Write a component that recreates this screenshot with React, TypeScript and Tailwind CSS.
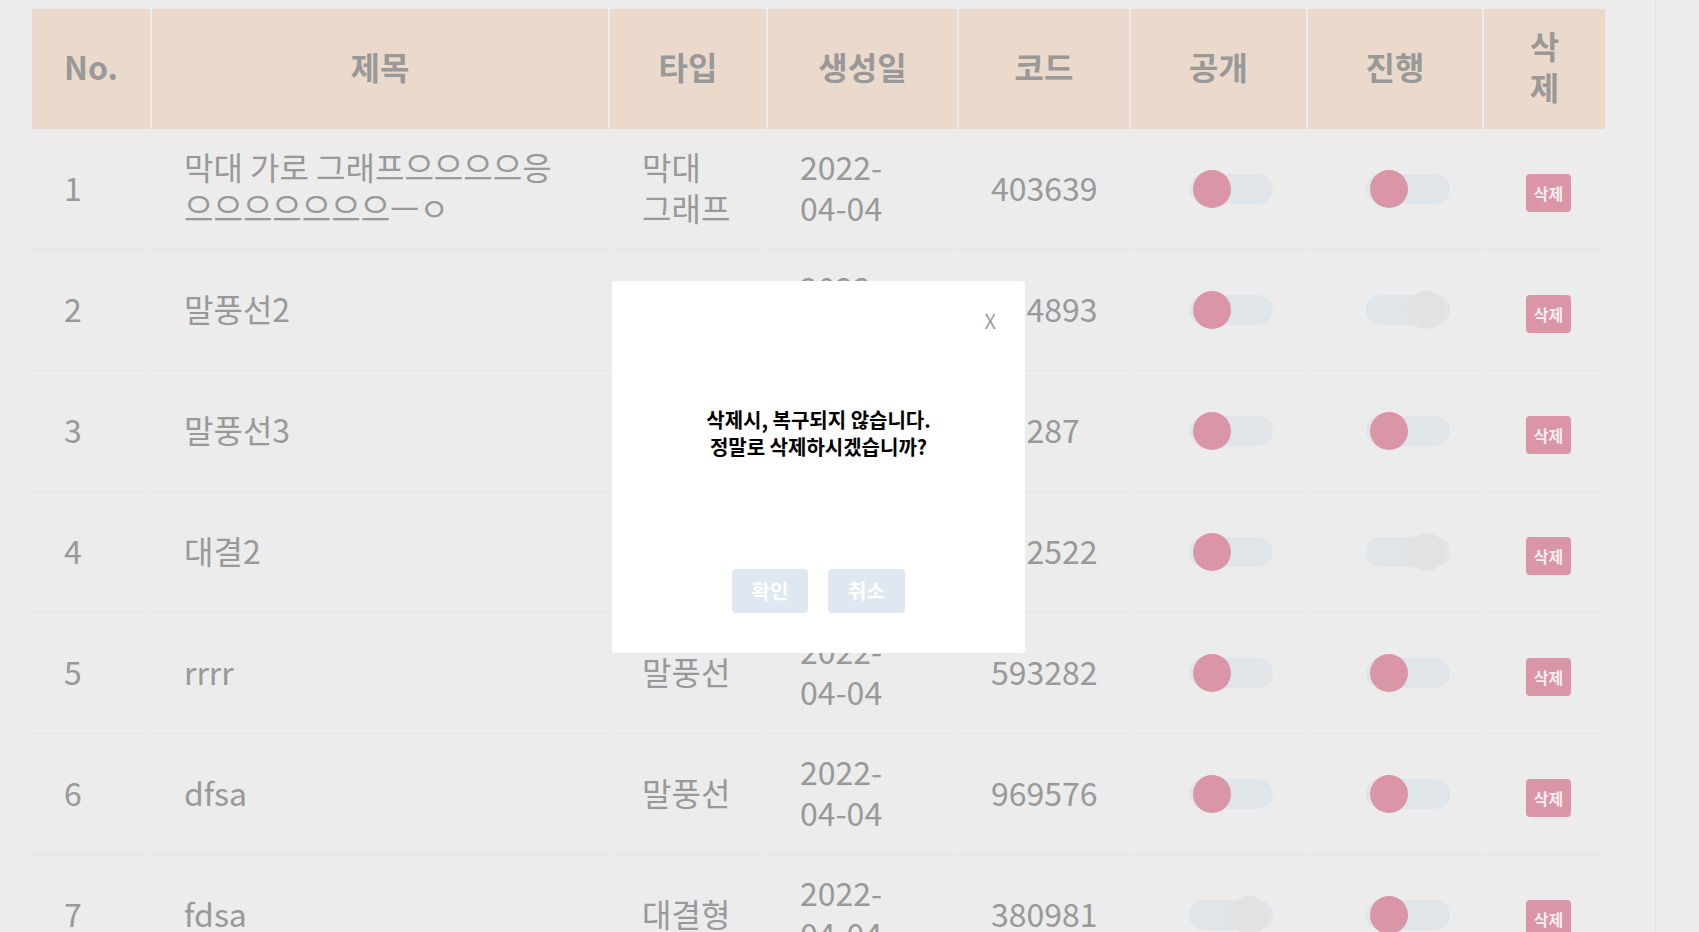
import React from "react";

type Row = {
  no: number;
  title: string;
  type: string;
  date: string;
  code: string;
  open: boolean;
  progress: boolean;
};

const rows: Row[] = [
  { no: 1, title: "막대 가로 그래프으으으으응으으으으으으으ㅡㅇ", type: "막대 그래프", date: "2022-04-04", code: "403639", open: true, progress: true },
  { no: 2, title: "말풍선2", type: "말풍선", date: "2022-04-04", code: "514893", open: true, progress: false },
  { no: 3, title: "말풍선3", type: "말풍선", date: "2022-04-04", code: "49287", open: true, progress: true },
  { no: 4, title: "대결2", type: "대결형", date: "2022-04-04", code: "672522", open: true, progress: false },
  { no: 5, title: "rrrr", type: "말풍선", date: "2022-04-04", code: "593282", open: true, progress: true },
  { no: 6, title: "dfsa", type: "말풍선", date: "2022-04-04", code: "969576", open: true, progress: true },
  { no: 7, title: "fdsa", type: "대결형", date: "2022-04-04", code: "380981", open: false, progress: true },
];

function Toggle({ on }: { on: boolean }) {
  return (
    <div className="relative ml-[26px] mt-[4px] h-[30px] w-[84px] rounded-full bg-[#dfe5e8]">
      {on ? (
        <div className="absolute left-[4px] top-[-4px] h-[38px] w-[38px] rounded-full bg-[#da95a6]" />
      ) : (
        <div className="absolute right-[5px] top-[-4px] h-[38px] w-[38px] rounded-full bg-[#e2e2e2]" />
      )}
    </div>
  );
}

export default function App() {
  const th =
    "h-[120px] bg-[#ebd9cb] px-8 pb-[6px] text-center align-middle font-bold text-[#999999]";
  const td =
    "h-[121px] border-b border-[#e2e5e7] px-8 pb-[4px] text-left align-middle text-[#999999]";
  return (
    <div className="relative h-screen w-full overflow-hidden bg-[#ececec] font-['Noto_Sans_CJK_KR','Noto_Sans',sans-serif]">
      <div className="flex h-full">
        <div className="flex-1 pl-[30px] pt-[9px]">
          <table className="w-[1575px] table-fixed border-separate border-spacing-x-[2px] border-spacing-y-0 text-[32px] leading-[41px]">
            <colgroup>
              <col className="w-[118px]" />
              <col className="w-[456px]" />
              <col className="w-[156px]" />
              <col className="w-[189px]" />
              <col className="w-[170px]" />
              <col className="w-[175px]" />
              <col className="w-[174px]" />
              <col className="w-[121px]" />
            </colgroup>
            <thead>
              <tr>
                <th className={th}>No.</th>
                <th className={th}>제목</th>
                <th className={th}>타입</th>
                <th className={th}>생성일</th>
                <th className={th}>코드</th>
                <th className={th}>공개</th>
                <th className={th}>진행</th>
                <th className={th}>삭제</th>
              </tr>
            </thead>
            <tbody>
              {rows.map((r) => (
                <tr key={r.no}>
                  <td className={td}>{r.no}</td>
                  <td className={td}>{r.title}</td>
                  <td className={td}>{r.type}</td>
                  <td className={td}>{r.date}</td>
                  <td className={td}>{r.code}</td>
                  <td className={td}>
                    <Toggle on={r.open} />
                  </td>
                  <td className={td}>
                    <Toggle on={r.progress} />
                  </td>
                  <td className={td}>
                    <button className="ml-[10px] mt-[12px] flex h-[38px] w-[45px] items-center justify-center rounded-[4px] bg-[#da95a6] text-[16px] font-bold leading-none text-[#f5eef0]">
                      삭제
                    </button>
                  </td>
                </tr>
              ))}
            </tbody>
          </table>
        </div>
        <div className="w-[44px] border-l border-[#e6e3e0] bg-[#ececec]" />
      </div>

      <div className="absolute left-[612px] top-[281px] flex h-[372px] w-[413px] flex-col rounded-[3px] bg-white">
        <div className="flex justify-end pr-[29px] pt-[30px]">
          <span className="text-[20px] leading-[20px] text-[#a0a0a0]">X</span>
        </div>
        <div className="mt-[75px] text-center text-[20px] font-bold leading-[27px] text-black">
          <p>삭제시, 복구되지 않습니다.</p>
          <p>정말로 삭제하시겠습니까?</p>
        </div>
        <div className="mt-auto flex justify-center gap-[20px] pb-[40px]">
          <button className="h-[44px] w-[76px] rounded-[4px] bg-[#dfe7f1] text-[20px] font-bold text-white">
            확인
          </button>
          <button className="h-[44px] w-[77px] rounded-[4px] bg-[#dfe7f1] text-[20px] font-bold text-white">
            취소
          </button>
        </div>
      </div>
    </div>
  );
}
